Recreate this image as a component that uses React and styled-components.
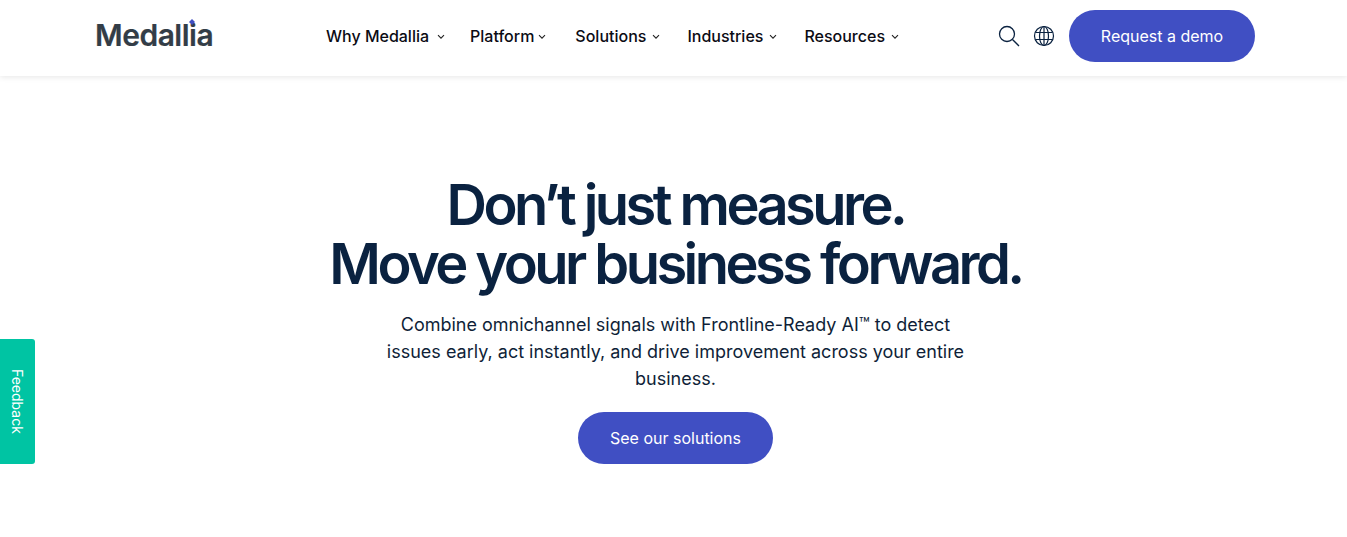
import React from "react";
import styled, { createGlobalStyle } from "styled-components";

const Global = createGlobalStyle`
  html, body { margin: 0; padding: 0; background: #fff; }
  body { font-family: Inter, "Liberation Sans", sans-serif; overflow: hidden; }
`;
const Page = styled.div`
  position: relative;
  height: 537px;
  overflow: hidden;
`;
const Header = styled.header`
  height: 76px;
  box-sizing: border-box;
  padding: 10px 92px 14px 95px;
  display: flex;
  align-items: center;
  background: #fff;
  box-shadow: 0 1px 6px rgba(0, 0, 0, 0.1);
`;
const Logo = styled.div`
  position: relative;
  width: 231px;
  margin-top: -2px;
  font-size: 30px;
  font-weight: 600;
  letter-spacing: -0.5px;
  line-height: 30px;
  color: #333d47;
  -webkit-text-stroke: 0.2px #333d47;
`;
const LogoDot = styled.svg`
  position: absolute;
  left: 94px;
  top: -1px;
`;
const Nav = styled.nav`
  display: flex;
  align-items: center;
  flex: 1;
`;
const NavItem = styled.a`
  display: flex;
  align-items: center;
  gap: ${p => p.$gap}px;
  margin-right: ${p => p.$mr}px;
  font-size: 16px;
  font-weight: 500;
  color: #0b0b14;
`;
const ChevronIcon = styled.svg`
  margin-top: 2px;
`;
const Chevron = () => (
  <ChevronIcon width="8" height="6" viewBox="0 0 8 6" fill="none" stroke="#222" strokeWidth="1.1"><path d="M1 1.2 4 4.2 7 1.2" /></ChevronIcon>
);
const Icons = styled.div`
  display: flex;
  align-items: center;
  gap: 13px;
  margin-right: 14px;
`;
const Pill = styled.a`
  display: flex;
  align-items: center;
  justify-content: center;
  width: ${p => p.$w}px;
  height: 52px;
  border-radius: 26px;
  background: #404fc3;
  color: #fff;
  font-size: 16px;
  font-weight: 400;
`;
const Hero = styled.main`
  display: flex;
  flex-direction: column;
  align-items: center;
  padding: 100px 0 0 4px;
`;
const Title = styled.h1`
  margin: 0;
  font-size: 56px;
  line-height: 59px;
  font-weight: 600;
  letter-spacing: -3.55px;
  color: #0a2240;
  text-align: center;
`;
const Lead = styled.p`
  margin: 17px 0 20px;
  width: 600px;
  font-size: 18px;
  line-height: 27px;
  color: #0f1f38;
  text-align: center;
`;
const Feedback = styled.a`
  position: absolute;
  left: 0;
  top: 339px;
  width: 35px;
  height: 125px;
  border-radius: 0 3px 3px 0;
  background: #00c4a3;
  color: #fff;
  font-size: 14px;
  display: flex;
  align-items: center;
  justify-content: center;
  writing-mode: vertical-rl;
`;

const items = [
  ["Why Medallia", 8, 25],
  ["Platform", 4, 29],
  ["Solutions", 6, 27],
  ["Industries", 6, 27],
  ["Resources", 6, 0],
];

export default function App() {
  return (
    <Page>
      <Global />
      <Header>
        <Logo>
          Medallia
          <LogoDot width="6" height="6" viewBox="0 0 6 6"><path d="M3 0 6 3 3 6 0 3Z" fill="#404fc3" /></LogoDot>
        </Logo>
        <Nav>
          {items.map(([t, g, m]) => (
            <NavItem key={t} $gap={g} $mr={m}>{t}<Chevron /></NavItem>
          ))}
        </Nav>
        <Icons>
          <svg width="22" height="22" viewBox="0 0 22 22" fill="none" stroke="#0a2240" strokeWidth="1.3">
            <circle cx="9" cy="9" r="7.5" /><path d="M14.500 14.500 21 21" />
          </svg>
          <svg width="22" height="22" viewBox="0 0 22 22" fill="none" stroke="#0a2240" strokeWidth="1.2">
            <circle cx="11" cy="11" r="9.500" /><ellipse cx="11" cy="11" rx="4.500" ry="9.500" />
            <path d="M11 1.500V20.500M2.500 7.500H19.500M2.500 14.500H19.500" />
          </svg>
        </Icons>
        <Pill $w={186}>Request a demo</Pill>
      </Header>
      <Hero>
        <Title>Don’t just measure.<br />Move your business forward.</Title>
        <Lead>Combine omnichannel signals with Frontline-Ready AI™ to detect issues early, act instantly, and drive improvement across your entire business.</Lead>
        <Pill $w={195}>See our solutions</Pill>
      </Hero>
      <Feedback>Feedback</Feedback>
    </Page>
  );
}
